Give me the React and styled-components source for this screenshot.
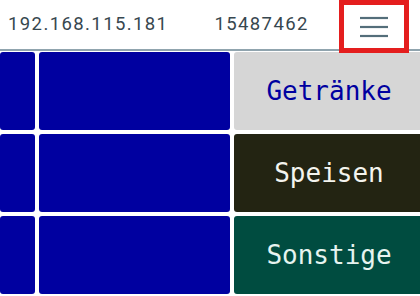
import React from 'react';
import styled, { createGlobalStyle } from 'styled-components';

const GlobalStyle = createGlobalStyle`
  html, body {
    margin: 0;
    padding: 0;
    background: #fff;
    overflow: hidden;
  }
  * {
    box-sizing: border-box;
  }
`;

const Page = styled.div`
  width: 420px;
  height: 296px;
  display: flex;
  flex-direction: column;
  overflow: hidden;
  font-family: Roboto, 'Liberation Sans', sans-serif;
`;

const Header = styled.header`
  height: 51px;
  flex: none;
  display: flex;
  align-items: flex-start;
  border-bottom: 2px solid #90a4ae;
  position: relative;
`;

const InfoText = styled.span`
  display: block;
  height: 49px;
  line-height: 49px;
  font-size: 18.5px;
  letter-spacing: 1.4px;
  color: #37474f;
  margin-left: ${(p) => p.$left}px;
`;

const MenuButton = styled.button`
  margin-left: auto;
  margin-right: 11px;
  width: 70px;
  height: 53px;
  margin-bottom: -4px;
  border: 5px solid #e41e1e;
  background: #fff;
  padding: 0;
  display: flex;
  align-items: center;
  justify-content: center;
  position: relative;
  z-index: 2;
  cursor: pointer;
`;

const Grid = styled.div`
  flex: 1;
  margin-top: 1px;
  display: grid;
  grid-template-columns: 35px 191px 190px;
  grid-auto-rows: 78px;
  column-gap: 4px;
  row-gap: 4px;
`;

const Tile = styled.div`
  background: #0000a0;
  border-radius: 3px;
`;

const CategoryButton = styled.button`
  border: none;
  border-radius: 3px;
  background: ${(p) => p.$bg};
  color: ${(p) => p.$fg};
  font-family: 'DejaVu Sans Mono', 'Liberation Mono', monospace;
  font-size: 26px;
  padding: 0;
  display: flex;
  align-items: center;
  justify-content: center;
  cursor: pointer;
`;

const categories = [
  { name: 'Getränke', bg: '#d6d6d6', fg: '#0000a0' },
  { name: 'Speisen', bg: '#232412', fg: '#f4f4ee' },
  { name: 'Sonstige', bg: '#004c40', fg: '#e6f4f0' },
];

const Hamburger = () => (
  <svg width="30" height="22" viewBox="0 0 30 22">
    <g stroke="#546e7a" strokeWidth="2.2">
      <line x1="1" y1="2" x2="29" y2="2" />
      <line x1="1" y1="11" x2="29" y2="11" />
      <line x1="1" y1="20" x2="29" y2="20" />
    </g>
  </svg>
);

const App = () => (
  <Page>
    <GlobalStyle />
    <Header>
      <InfoText $left={8}>192.168.115.181</InfoText>
      <InfoText $left={46}>15487462</InfoText>
      <MenuButton type="button" aria-label="Menü">
        <Hamburger />
      </MenuButton>
    </Header>
    <Grid>
      {categories.map((c) => (
        <React.Fragment key={c.name}>
          <Tile />
          <Tile />
          <CategoryButton type="button" $bg={c.bg} $fg={c.fg}>
            {c.name}
          </CategoryButton>
        </React.Fragment>
      ))}
    </Grid>
  </Page>
);

export default App;
